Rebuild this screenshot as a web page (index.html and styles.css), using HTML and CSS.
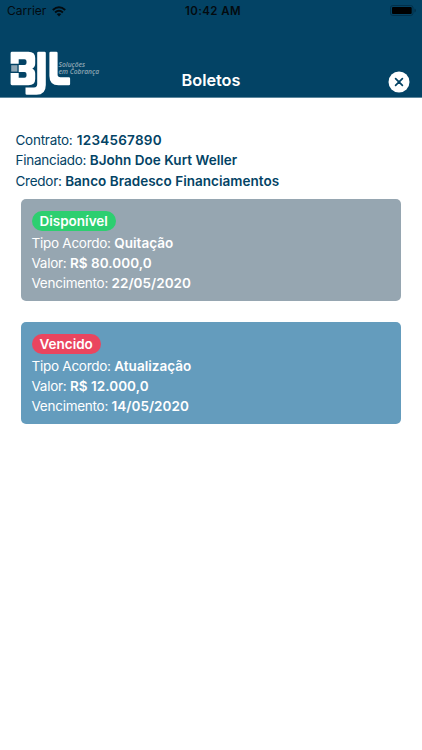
FILE: index.html
```html
<!DOCTYPE html>
<html lang="pt-BR">
<head>
<meta charset="utf-8">
<title>Boletos</title>
<link rel="stylesheet" href="styles.css">
</head>
<body>
<header class="header">
  <div class="status">
    <div class="carrier"><span>Carrier</span>
      <svg class="wifi" width="14" height="11" viewBox="0 0 14 11" fill="none" stroke="#030b10" stroke-width="2"><path d="M.8 4Q7-1.6 13.2 4M3.1 6.5Q7 3 10.9 6.5"/><path d="M4.7 8.1Q7 6.2 9.3 8.1L7 10.4Z" fill="#030b10" stroke="none"/></svg>
    </div>
    <span class="clock">10:42 AM</span>
    <svg class="battery" width="27" height="12" viewBox="0 0 27 12"><rect x=".5" y=".5" width="22.5" height="10" rx="2.4" fill="none" stroke="#02304a"/><rect x="2" y="2" width="19.7" height="7" rx="1" fill="#000"/><path d="M24.4 3.5Q26 4 26 5.5T24.4 7.5Z" fill="#02304a"/></svg>
  </div>
  <div class="bar">
    <div class="brand">
      <svg class="logo" width="62" height="46" viewBox="0 0 62 46">
        <path fill="#fff" fill-rule="evenodd" d="M2 .8H18.500Q25.200 .8 25.200 7V12.500Q25.200 16 22.300 17.500Q25.200 19 25.200 22.500V28Q25.200 34.200 18.500 34.200H2Q.6 34.200 .6 32.800V22H8.700V26.800H14.500Q16.500 26.800 16.500 24.800V23Q16.500 21 14.500 21H8.700V14H14.500Q16.500 14 16.500 12V10.200Q16.500 8.200 14.500 8.200H8.700V12.800H.6V2.200Q.6 .8 2 .8Z"/>
        <rect x="1.200" y="14.200" width="6.200" height="6.400" fill="#8da5b3"/>
        <path fill="#fff" d="M28.500 .8H34.500Q35.800 .8 35.800 2.100V34Q35.800 43.800 26.500 43.800H16.800Q15.500 43.800 15.500 42.500V36.400H24Q27.200 36.400 27.200 33V2.100Q27.200 .8 28.500 .8Z"/>
        <path fill="#fff" d="M40.700 .8H46.300Q47.600 .8 47.600 2.100V23.500Q47.600 26.300 50.400 26.300H58.800Q60.100 26.300 60.100 27.600V33Q60.100 34.300 58.800 34.300H48.500Q39.400 34.300 39.400 25V2.100Q39.400 .8 40.700 .8Z"/>
      </svg>
      <div class="tagline"><div>Soluções</div><div>em Cobrança</div></div>
    </div>
    <h1 class="title">Boletos</h1>
    <svg class="close" width="22" height="22" viewBox="0 0 22 22"><circle cx="11" cy="11" r="10.500" fill="#fff"/><path d="M7.600 7.600l6.800 6.800m0-6.800l-6.800 6.800" stroke="#034365" stroke-width="1.700" stroke-linecap="round"/></svg>
  </div>
</header>
<main>
  <section class="contract">
    <p>Contrato: <b class="number">1234567890</b></p>
    <p>Financiado: <b>BJohn Doe Kurt Weller</b></p>
    <p>Credor: <b>Banco Bradesco Financiamentos</b></p>
  </section>
  <article class="card card-available">
    <span class="badge badge-green">Disponível</span>
    <p>Tipo Acordo: <b>Quitação</b></p>
    <p>Valor: <b>R$ 80.000,0</b></p>
    <p>Vencimento: <b>22/05/2020</b></p>
  </article>
  <article class="card card-expired">
    <span class="badge badge-red">Vencido</span>
    <p>Tipo Acordo: <b>Atualização</b></p>
    <p>Valor: <b>R$ 12.000,0</b></p>
    <p>Vencimento: <b>14/05/2020</b></p>
  </article>
</main>
</body>
</html>
```
FILE: styles.css
```css
* { box-sizing: border-box; }
body { margin: 0; height: 750px; background: #fff; font-family: Inter, sans-serif; font-size: 13.5px; line-height: 20.4px; color: #034365; }
p, h1 { margin: 0; }
p { white-space: nowrap; letter-spacing: -.26px; }
b { font-weight: 600; letter-spacing: .03px; }
.number { margin-left: .8px; letter-spacing: .25px; }
.header { height: 98px; background: #034365; border-bottom: 1px solid #5d879d; }
.status { display: grid; grid-template-columns: 1fr auto 1fr; height: 22px; padding: 0 5px 0 7px; align-items: center; font-size: 12px; line-height: 22px; color: #030b10; }
.carrier { display: flex; align-items: center; gap: 5.5px; }
.clock { font-weight: 600; font-size: 11.5px; letter-spacing: .4px; margin-left: 2px; }
.battery { justify-self: end; }
.bar { display: grid; grid-template-columns: 1fr auto 1fr; padding: 29px 12px 0 10px; }
.brand { display: flex; height: 46px; }
.logo { flex: none; }
.tagline { margin: 9.5px 0 0 -13.5px; font: italic 600 6.7px/7.5px "Open Sans", sans-serif; color: #8da5b3; white-space: nowrap; }
.title { margin: 17px 0 0 2px; font-size: 16.3px; font-weight: 600; line-height: 24px; color: #fff; }
.close { justify-self: end; margin-top: 20px; }
.contract { padding: 32px 15.5px 7.8px; }
.card { width: 380px; height: 102px; margin: 0 0 21px 21px; padding: 12px 10.5px 0; border-radius: 5px; color: #fff; }
.card-available { background: #96a6b1; }
.card-expired { background: #649cbd; }
.badge { display: block; width: fit-content; height: 20px; margin-bottom: 1.5px; padding: 0 8px; border-radius: 10px; font-weight: 600; line-height: 21.4px; }
.badge-green { background: #2dcf70; }
.badge-red { background: #ea455f; }
```
